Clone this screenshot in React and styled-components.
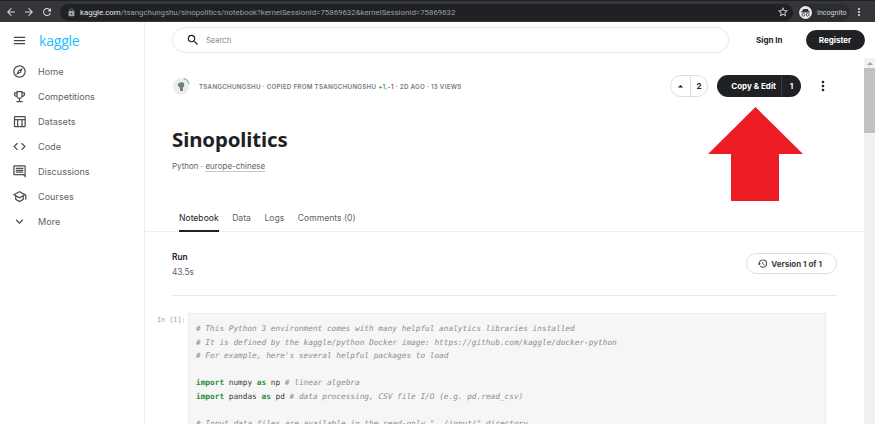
import React from 'react';
import styled, { createGlobalStyle } from 'styled-components';
import {
  MdArrowBack, MdArrowForward, MdRefresh, MdLock, MdStarBorder, MdMoreVert, MdMenu, MdSearch,
  MdOutlineExplore, MdOutlineEmojiEvents, MdOutlineTableChart, MdCode, MdOutlineComment,
  MdOutlineSchool, MdExpandMore, MdHistory, MdArrowDropUp,
} from 'react-icons/md';

const GlobalStyle = createGlobalStyle`
  html, body { margin: 0; padding: 0; background: #fff; overflow: hidden; }
  * { box-sizing: border-box; }
  body { font-family: Inter, "Liberation Sans", sans-serif; }
`;

const Page = styled.div`
  position: relative;
  width: 875px;
  height: 424px;
  display: flex;
  flex-direction: column;
  overflow: hidden;
`;

const BrowserBar = styled.div`
  height: 22px;
  flex: none;
  display: flex;
  align-items: center;
  background: #35363a;
  color: #dadce0;
  padding: 1px 0 0 2px;
  border-top: 1px solid #1f2023;
`;

const BrowserButton = styled.span`
  width: 18px;
  height: 18px;
  flex: none;
  display: flex;
  align-items: center;
  justify-content: center;
  font-size: 12px;
`;

const UrlBar = styled.div`
  margin-left: 4px;
  width: 733px;
  height: 17px;
  flex: none;
  border-radius: 9px;
  background: #202124;
  display: flex;
  align-items: center;
  padding: 0 4px 0 7px;
  font-family: Roboto, sans-serif;
  font-size: 7.85px;
  color: #9aa0a6;
  white-space: nowrap;
  overflow: hidden;
`;

const UrlHost = styled.span`
  color: #e8eaed;
  margin-left: 4px;
`;

const UrlSpacer = styled.span`
  flex: 1;
`;

const Incognito = styled.div`
  margin-left: 5px;
  height: 17px;
  width: 52px;
  flex: none;
  padding-left: 1px;
  display: flex;
  align-items: center;
  gap: 5px;
  border-radius: 9px;
  background: #2b2c2f;
  font-family: Roboto, sans-serif;
  font-size: 7.1px;
  color: #cfd1d4;
`;

const Body = styled.div`
  flex: 1;
  display: flex;
  min-height: 0;
`;

const Sidebar = styled.nav`
  width: 145px;
  flex: none;
  border-right: 1px solid #eeeeee;
  padding-top: 6px;
`;

const LogoRow = styled.div`
  height: 24px;
  display: flex;
  align-items: center;
  padding-left: 12px;
  margin-bottom: 7px;
  font-size: 15px;
  color: #444;
`;

const Logo = styled.span`
  margin-left: 12px;
  font-family: "Open Sans", sans-serif;
  font-size: 14.2px;
  letter-spacing: -0.3px;
  color: #20beff;
`;

const NavItem = styled.div`
  height: 25px;
  display: flex;
  align-items: center;
  gap: 11px;
  padding-left: 12px;
  font-size: 9.1px;
  color: #5f6368;
  svg { font-size: 15px; flex: none; color: #4d4d4d; }
`;

const Main = styled.main`
  flex: 1;
  min-width: 0;
  padding: 5px 0 0 27px;
`;

const TopRow = styled.div`
  display: flex;
  align-items: center;
  height: 26px;
`;

const SearchBox = styled.div`
  width: 557px;
  height: 26px;
  flex: none;
  border: 1px solid #e9e9e9;
  border-radius: 13px;
  display: flex;
  align-items: center;
  gap: 6px;
  padding-left: 13px;
  font-size: 7.6px;
  color: #80868b;
  svg { font-size: 14px; color: #202124; }
`;

const SignIn = styled.span`
  margin-left: 27px;
  font-size: 8px;
  font-weight: 700;
  color: #202124;
  white-space: nowrap;
`;

const Register = styled.span`
  margin-left: 23px;
  width: 59px;
  height: 20px;
  flex: none;
  border-radius: 10px;
  background: #202124;
  color: #fff;
  font-size: 8px;
  font-weight: 700;
  display: flex;
  align-items: center;
  justify-content: center;
`;

const Content = styled.div`
  width: 665px;
`;

const MetaRow = styled.div`
  margin-top: 22px;
  height: 22px;
  display: flex;
  align-items: center;
`;

const MetaText = styled.span`
  margin-left: 9px;
  font-size: 6.2px;
  font-weight: 600;
  letter-spacing: 0.28px;
  color: #777b80;
  white-space: nowrap;
`;

const Plus = styled.span` color: #20a84a; `;
const Minus = styled.span` color: #d9443a; `;

const MetaSpacer = styled.span`
  flex: 1;
`;

const VotePill = styled.div`
  width: 38px;
  height: 22px;
  border: 1px solid #dedede;
  border-radius: 11px;
  display: flex;
  align-items: center;
  font-size: 8px;
  font-weight: 700;
  color: #202124;
`;

const VoteArrow = styled.span`
  width: 20px;
  height: 100%;
  border-right: 1px solid #dedede;
  display: flex;
  align-items: center;
  justify-content: center;
  font-size: 13px;
`;

const VoteCount = styled.span`
  flex: 1;
  text-align: center;
`;

const CopyButton = styled.div`
  margin-left: 9px;
  width: 84px;
  height: 22px;
  border-radius: 11px;
  background: #202124;
  color: #fff;
  display: flex;
  align-items: center;
  font-size: 8px;
  font-weight: 700;
`;

const CopyLabel = styled.span`
  width: 65px;
  height: 100%;
  border-right: 1px solid #3c3d40;
  display: flex;
  align-items: center;
  justify-content: flex-end;
  padding-right: 5px;
  white-space: nowrap;
`;

const CopyCount = styled.span`
  flex: 1;
  text-align: center;
`;

const MoreButton = styled.span`
  margin: 0 6px 0 14px;
  font-size: 16px;
  display: flex;
  color: #202124;
`;

const Title = styled.h1`
  margin: 29px 0 0;
  height: 27px;
  font-size: 20.4px;
  line-height: 27px;
  font-weight: 700;
  font-family: "Noto Sans", sans-serif;
  letter-spacing: -0.1px;
  color: #202124;
`;

const Subtitle = styled.div`
  margin-top: 7px;
  font-size: 8px;
  line-height: 12px;
  color: #5f6368;
`;

const SubLink = styled.span`
  border-bottom: 1px solid #c9c9c9;
`;

const Tabs = styled.div`
  margin: 38px 0 0 -27px;
  width: 719px;
  height: 22px;
  padding-left: 34px;
  border-bottom: 1px solid #eeeeee;
  display: flex;
  gap: 13.5px;
`;

const Tab = styled.div`
  height: 22px;
  font-size: 8.6px;
  line-height: 17px;
  color: ${p => (p.$active ? '#202124' : '#5f6368')};
  border-bottom: 2px solid ${p => (p.$active ? '#202124' : 'transparent')};
`;

const RunRow = styled.div`
  margin-top: 19px;
  height: 45px;
  display: flex;
  justify-content: space-between;
  border-bottom: 1px solid #e8e8e8;
`;

const RunLabel = styled.div`
  font-size: 8.3px;
  line-height: 12px;
  font-weight: 600;
  color: #202124;
`;

const RunTime = styled.div`
  margin-top: 3px;
  font-size: 8.3px;
  line-height: 12px;
  color: #5f6368;
`;

const VersionPill = styled.div`
  width: 91px;
  height: 21px;
  margin-top: 2px;
  padding-right: 4px;
  border: 1px solid #dedede;
  border-radius: 11px;
  display: flex;
  align-items: center;
  justify-content: center;
  gap: 3px;
  font-size: 8px;
  font-weight: 700;
  color: #3c4043;
  svg { font-size: 11px; }
`;

const CellRow = styled.div`
  margin: 17px 0 0 -15px;
  display: flex;
  align-items: flex-start;
  font-family: "DejaVu Sans Mono", "Liberation Mono", monospace;
`;

const Prompt = styled.div`
  width: 31px;
  padding-top: 3px;
  font-size: 6.8px;
  line-height: 9px;
  color: #9a9fa5;
`;

const CodeBox = styled.pre`
  margin: 0;
  width: 638px;
  height: 140px;
  padding: 8px 7px;
  background: #f6f6f6;
  border: 1px solid #ededed;
  font-family: inherit;
  font-size: 7.78px;
  line-height: 13.5px;
  color: #3c4043;
`;

const Comment = styled.span`
  font-style: italic;
  color: #8a8f94;
`;

const Keyword = styled.span`
  font-weight: 700;
  color: #2e8b3d;
`;

const Scrollbar = styled.div`
  width: 11px;
  flex: none;
  margin-top: 36px;
  background: #f1f1f1;
  display: flex;
  flex-direction: column;
`;

const ScrollUp = styled.div`
  height: 10px;
  display: flex;
  align-items: center;
  justify-content: center;
  &::before {
    content: '';
    border-left: 3px solid transparent;
    border-right: 3px solid transparent;
    border-bottom: 3px solid #a3a3a3;
  }
`;

const ScrollThumb = styled.div`
  height: 65px;
  background: #c1c1c1;
`;

const RedArrow = styled.svg`
  position: absolute;
  left: 708px;
  top: 107px;
`;

const navItems = [
  [MdOutlineExplore, 'Home'],
  [MdOutlineEmojiEvents, 'Competitions'],
  [MdOutlineTableChart, 'Datasets'],
  [MdCode, 'Code'],
  [MdOutlineComment, 'Discussions'],
  [MdOutlineSchool, 'Courses'],
  [MdExpandMore, 'More'],
];

const IncognitoIcon = () => (
  <svg width="13" height="13" viewBox="0 0 13 13">
    <circle cx="6.5" cy="6.5" r="6.5" fill="#e8eaed" />
    <path d="M4 3h5l.8 2.6H11v.8H2v-.8h1.2z" fill="#35363a" />
    <circle cx="4.4" cy="8.8" r="1.4" fill="none" stroke="#35363a" strokeWidth=".8" />
    <circle cx="8.6" cy="8.8" r="1.4" fill="none" stroke="#35363a" strokeWidth=".8" />
  </svg>
);

const Avatar = () => (
  <svg width="18" height="18" viewBox="0 0 18 18">
    <circle cx="9" cy="9.5" r="8" fill="#ececec" />
    <path d="M6 6.5l4-1.5 2 1.2.2 3-1.4 1.2.2 3.6H8.2l-.4-3.4L6 9z" fill="#77797c" />
    <path d="M11.5 1.2A8 8 0 0 1 17.2 7" fill="none" stroke="#35c46b" strokeWidth="1" />
  </svg>
);

export default function App() {
  return (
    <Page>
      <GlobalStyle />
      <BrowserBar>
        <BrowserButton><MdArrowBack /></BrowserButton>
        <BrowserButton><MdArrowForward /></BrowserButton>
        <BrowserButton><MdRefresh /></BrowserButton>
        <UrlBar>
          <MdLock size={9} />
          <UrlHost>kaggle.com</UrlHost>
          /tsangchungshu/sinopolitics/notebook?kernelSessionId=75869632&amp;kernelSessionId=75869632
          <UrlSpacer />
          <MdStarBorder size={12} color="#dadce0" />
        </UrlBar>
        <Incognito><IncognitoIcon />Incognito</Incognito>
        <BrowserButton><MdMoreVert /></BrowserButton>
      </BrowserBar>
      <Body>
        <Sidebar>
          <LogoRow>
            <MdMenu />
            <Logo>kaggle</Logo>
          </LogoRow>
          {navItems.map(([Icon, label]) => (
            <NavItem key={label}><Icon />{label}</NavItem>
          ))}
        </Sidebar>
        <Main>
          <TopRow>
            <SearchBox><MdSearch />Search</SearchBox>
            <SignIn>Sign In</SignIn>
            <Register>Register</Register>
          </TopRow>
          <Content>
            <MetaRow>
              <Avatar />
              <MetaText>
                TSANGCHUNGSHU · COPIED FROM TSANGCHUNGSHU <Plus>+1</Plus>,<Minus>-1</Minus> · 2D AGO · 13 VIEWS
              </MetaText>
              <MetaSpacer />
              <VotePill>
                <VoteArrow><MdArrowDropUp /></VoteArrow>
                <VoteCount>2</VoteCount>
              </VotePill>
              <CopyButton>
                <CopyLabel>Copy &amp; Edit</CopyLabel>
                <CopyCount>1</CopyCount>
              </CopyButton>
              <MoreButton><MdMoreVert /></MoreButton>
            </MetaRow>
            <Title>Sinopolitics</Title>
            <Subtitle>Python · <SubLink>europe-chinese</SubLink></Subtitle>
            <Tabs>
              <Tab $active>Notebook</Tab>
              <Tab>Data</Tab>
              <Tab>Logs</Tab>
              <Tab>Comments (0)</Tab>
            </Tabs>
            <RunRow>
              <div>
                <RunLabel>Run</RunLabel>
                <RunTime>43.5s</RunTime>
              </div>
              <VersionPill><MdHistory />Version 1 of 1</VersionPill>
            </RunRow>
            <CellRow>
              <Prompt>In [1]:</Prompt>
              <CodeBox>
                <Comment># This Python 3 environment comes with many helpful analytics libraries installed</Comment>{'\n'}
                <Comment># It is defined by the kaggle/python Docker image: https://github.com/kaggle/docker-python</Comment>{'\n'}
                <Comment># For example, here's several helpful packages to load</Comment>{'\n\n'}
                <Keyword>import</Keyword> numpy <Keyword>as</Keyword> np <Comment># linear algebra</Comment>{'\n'}
                <Keyword>import</Keyword> pandas <Keyword>as</Keyword> pd <Comment># data processing, CSV file I/O (e.g. pd.read_csv)</Comment>{'\n\n'}
                <Comment># Input data files are available in the read-only "../input/" directory</Comment>
              </CodeBox>
            </CellRow>
          </Content>
        </Main>
        <Scrollbar>
          <ScrollUp />
          <ScrollThumb />
        </Scrollbar>
      </Body>
      <RedArrow width="95" height="94" viewBox="0 0 95 94">
        <path d="M47.5 0L95 47H71V94H23V47H0z" fill="#ed1c24" />
      </RedArrow>
    </Page>
  );
}
